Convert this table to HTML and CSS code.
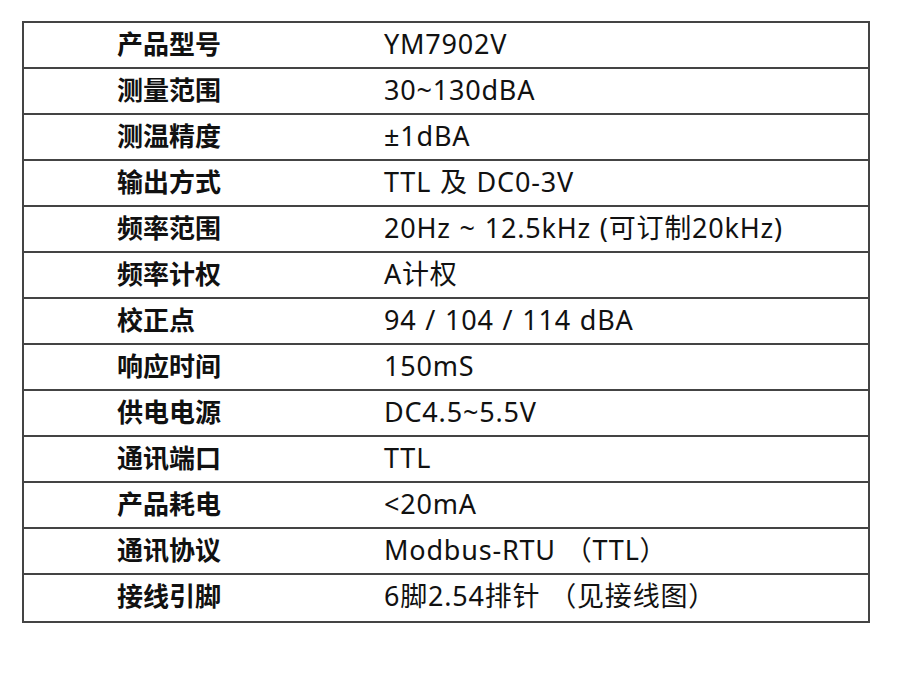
FILE: index.html
```html
<!DOCTYPE html>
<html lang="zh">
<head>
<meta charset="utf-8">
<link rel="stylesheet" href="styles.css">
</head>
<body>
<div class="spec">
  <div class="row"><div class="k">产品型号</div><div class="v">YM7902V</div></div>
  <div class="row"><div class="k">测量范围</div><div class="v">30~130dBA</div></div>
  <div class="row"><div class="k">测温精度</div><div class="v">±1dBA</div></div>
  <div class="row"><div class="k">输出方式</div><div class="v">TTL 及 DC0-3V</div></div>
  <div class="row"><div class="k">频率范围</div><div class="v">20Hz ~ 12.5kHz (可订制20kHz)</div></div>
  <div class="row"><div class="k">频率计权</div><div class="v">A计权</div></div>
  <div class="row"><div class="k">校正点</div><div class="v">94 / 104 / 114 dBA</div></div>
  <div class="row"><div class="k">响应时间</div><div class="v">150mS</div></div>
  <div class="row"><div class="k">供电电源</div><div class="v">DC4.5~5.5V</div></div>
  <div class="row"><div class="k">通讯端口</div><div class="v">TTL</div></div>
  <div class="row"><div class="k">产品耗电</div><div class="v">&lt;20mA</div></div>
  <div class="row"><div class="k">通讯协议</div><div class="v">Modbus-RTU （TTL）</div></div>
  <div class="row"><div class="k">接线引脚</div><div class="v">6脚2.54排针 （见接线图）</div></div>
</div>
</body>
</html>
```
FILE: styles.css
```css
html, body {
  margin: 0;
  padding: 0;
  background: #ffffff;
}
body {
  padding: 21px 0 0 22px;
  font-family: "Noto Sans", "Noto Sans CJK SC", sans-serif;
  color: #111111;
}
.spec {
  width: 844px;
  border: 2px solid #444444;
  padding-bottom: 2px;
}
.row {
  display: flex;
  height: 40px;
  padding-bottom: 4px;
  align-items: center;
  font-size: 26px;
}
.row + .row {
  border-top: 2px solid #444444;
}
.k {
  width: 267px;
  padding-left: 93px;
  font-family: "Noto Sans CJK SC", sans-serif;
  font-weight: 700;
  line-height: 1;
}
.v {
  font-size: 27px;
  line-height: 1;
  letter-spacing: 0.8px;
  word-spacing: 1px;
}
```
